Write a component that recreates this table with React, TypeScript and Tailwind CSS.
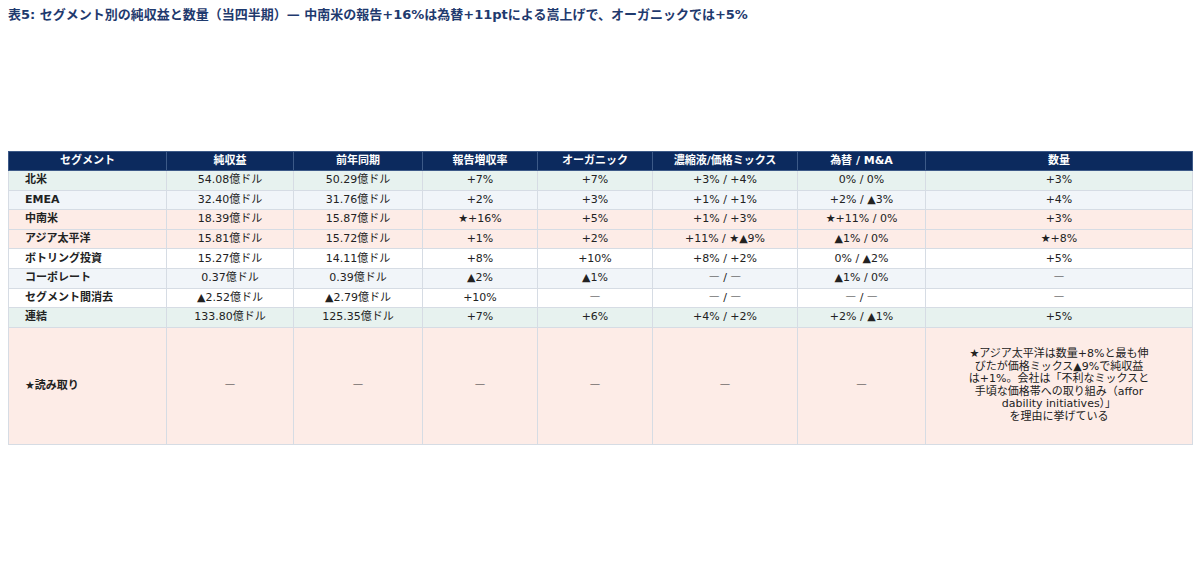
import React from "react";

type Tone = "green" | "slate" | "pink" | "white";

const tones: Record<Tone, string> = {
  green: "bg-[#e7f2ef]",
  slate: "bg-[#f1f5f9]",
  pink: "bg-[#fdece7]",
  white: "bg-white",
};

const headers = [
  "セグメント",
  "純収益",
  "前年同期",
  "報告増収率",
  "オーガニック",
  "濃縮液/価格ミックス",
  "為替 / M&A",
  "数量",
];

const widths = [158, 127, 129, 115, 115, 145, 128, 267];

const rows: { tone: Tone; cells: string[] }[] = [
  { tone: "green", cells: ["北米", "54.08億ドル", "50.29億ドル", "+7%", "+7%", "+3% / +4%", "0% / 0%", "+3%"] },
  { tone: "slate", cells: ["EMEA", "32.40億ドル", "31.76億ドル", "+2%", "+3%", "+1% / +1%", "+2% / ▲3%", "+4%"] },
  { tone: "pink", cells: ["中南米", "18.39億ドル", "15.87億ドル", "★+16%", "+5%", "+1% / +3%", "★+11% / 0%", "+3%"] },
  { tone: "pink", cells: ["アジア太平洋", "15.81億ドル", "15.72億ドル", "+1%", "+2%", "+11% / ★▲9%", "▲1% / 0%", "★+8%"] },
  { tone: "white", cells: ["ボトリング投資", "15.27億ドル", "14.11億ドル", "+8%", "+10%", "+8% / +2%", "0% / ▲2%", "+5%"] },
  { tone: "slate", cells: ["コーポレート", "0.37億ドル", "0.39億ドル", "▲2%", "▲1%", "— / —", "▲1% / 0%", "—"] },
  { tone: "white", cells: ["セグメント間消去", "▲2.52億ドル", "▲2.79億ドル", "+10%", "—", "— / —", "— / —", "—"] },
  { tone: "green", cells: ["連結", "133.80億ドル", "125.35億ドル", "+7%", "+6%", "+4% / +2%", "+2% / ▲1%", "+5%"] },
];

const note = [
  "★アジア太平洋は数量+8%と最も伸",
  "びたが価格ミックス▲9%で純収益",
  "は+1%。会社は「不利なミックスと",
  "手頃な価格帯への取り組み（affor",
  "dability initiatives）」",
  "を理由に挙げている",
];

// dashes use the full-width CJK bar so they read as wide as in the source
function Dashed({ text }: { text: string }) {
  const parts = text.split("—");
  return (
    <>
      {parts.map((p, i) => (
        <React.Fragment key={i}>
          {i > 0 && <span className="font-['Noto_Sans_CJK_JP'] leading-none text-[#333]">―</span>}
          {p}
        </React.Fragment>
      ))}
    </>
  );
}

export default function App() {
  return (
    <div className="min-h-[571px] bg-white px-2 pt-[6px] font-['DejaVu_Sans','Noto_Sans_CJK_JP',sans-serif] text-[#222]">
      <h1 className="text-[13px] font-bold leading-[18px] text-[#1f3a6e]">
        表5: セグメント別の純収益と数量（当四半期）— 中南米の報告+16%は為替+11ptによる嵩上げで、オーガニックでは+5%
      </h1>

      <table className="mt-[127px] w-[1184px] table-fixed border-collapse text-[11px]">
        <colgroup>
          {widths.map((w, i) => (
            <col key={i} style={{ width: w }} />
          ))}
        </colgroup>
        <thead>
          <tr className="h-[19px] bg-[#0c2a5e] text-white">
            {headers.map((h) => (
              <th key={h} className="border border-[#3d5a88] px-2 py-0 text-center font-bold leading-[18px]">
                {h}
              </th>
            ))}
          </tr>
        </thead>
        <tbody>
          {rows.map((r) => (
            <tr key={r.cells[0]} className={`h-[19.6px] ${tones[r.tone]}`}>
              {r.cells.map((c, i) => (
                <td
                  key={i}
                  className={
                    i === 0
                      ? "border border-[#d6dce4] py-0 pl-4 text-left font-bold leading-[18px]"
                      : "border border-[#d6dce4] px-2 py-0 text-center leading-[18px]"
                  }
                >
                  <Dashed text={c} />
                </td>
              ))}
            </tr>
          ))}
          <tr className={`h-[117px] ${tones.pink}`}>
            <td className="border border-[#d6dce4] pl-4 text-left font-bold">★読み取り</td>
            {[0, 1, 2, 3, 4, 5].map((i) => (
              <td key={i} className="border border-[#d6dce4] text-center">
                <Dashed text="—" />
              </td>
            ))}
            <td className="border border-[#d6dce4] text-center text-[11px] leading-[12.5px]">
              {note.map((l) => (
                <div key={l}>{l}</div>
              ))}
            </td>
          </tr>
        </tbody>
      </table>
    </div>
  );
}
